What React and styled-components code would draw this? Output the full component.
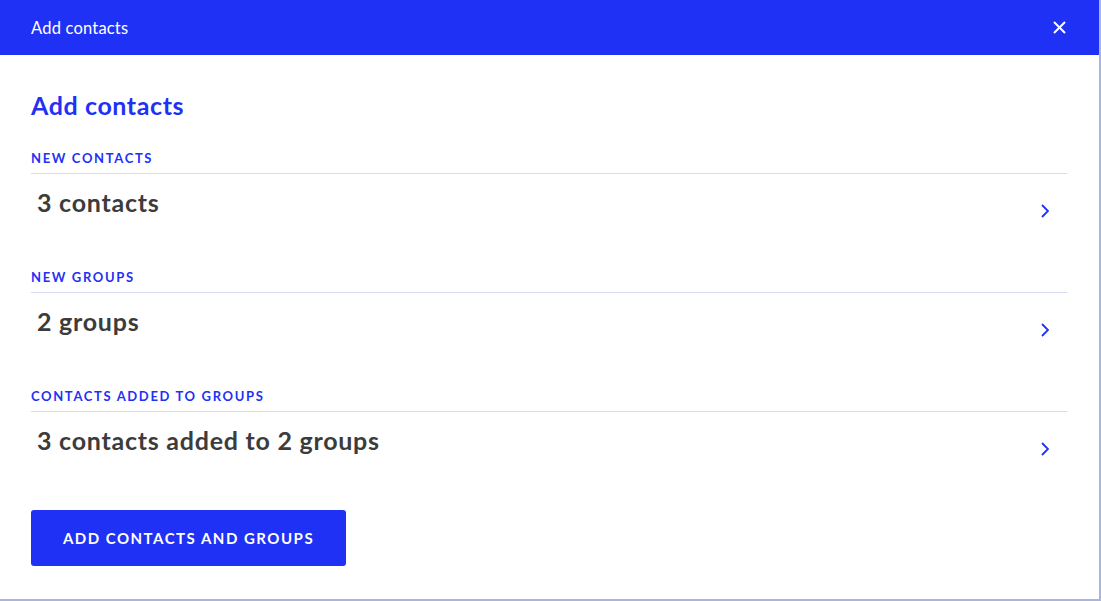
import styled, { createGlobalStyle } from "styled-components"

const GlobalStyle = createGlobalStyle`
    html, body {
        margin: 0;
        padding: 0;
        background: #ffffff;
    }
    body {
        font-family: Lato, "Noto Sans", "Liberation Sans", sans-serif;
    }
`

const BLUE = "#1f31f5"

const Modal = styled.div`
    width: 1099px;
    height: 599px;
    background: #ffffff;
    border-right: 2px solid #a9b5da;
    border-bottom: 2px solid #a9b5da;
    display: flex;
    flex-direction: column;
`
const Header = styled.div`
    height: 55px;
    background: ${BLUE};
    color: #ffffff;
    display: flex;
    align-items: center;
    justify-content: space-between;
    padding: 0 33px 0 31px;
    font-size: 16.5px;
    letter-spacing: 0.2px;
`
const CloseButton = styled.button`
    border: 0;
    background: none;
    padding: 0;
    width: 14px;
    height: 14px;
    display: flex;
    align-items: center;
    justify-content: center;
    cursor: pointer;
`
const Body = styled.div`
    padding: 35px 32px 0 31px;
    display: flex;
    flex-direction: column;
`
const Title = styled.h1`
    margin: 0 0 30px 0;
    font-size: 25px;
    line-height: 30px;
    letter-spacing: 0.6px;
    font-weight: 700;
    color: ${BLUE};
`
const Section = styled.section`
    display: flex;
    flex-direction: column;
    margin-bottom: ${(props) => props.$last ? "24px" : "21px"};
`
const Label = styled.div`
    font-size: 13px;
    line-height: 16px;
    font-weight: 700;
    letter-spacing: 1.65px;
    color: ${BLUE};
    padding-bottom: 7px;
    border-bottom: 1px solid #d6dcf3;
`
const Row = styled.div`
    height: 74px;
    display: flex;
    justify-content: space-between;
    cursor: pointer;
`
const RowText = styled.div`
    padding: 13px 0 0 6px;
    font-size: 25px;
    line-height: 30px;
    letter-spacing: 0.75px;
    font-weight: 700;
    color: #3c3c3c;
`
const Chevron = styled.span`
    align-self: center;
    margin-right: 18px;
    display: flex;
`
const PrimaryButton = styled.button`
    align-self: flex-start;
    width: 315px;
    height: 56px;
    border: 0;
    border-radius: 3px;
    background: ${BLUE};
    color: #ffffff;
    font-family: inherit;
    font-size: 15px;
    font-weight: 700;
    letter-spacing: 1.5px;
    cursor: pointer;
`

const sections = [
    { label: "NEW CONTACTS", text: "3 contacts" },
    { label: "NEW GROUPS", text: "2 groups" },
    { label: "CONTACTS ADDED TO GROUPS", text: "3 contacts added to 2 groups" },
]

export default function App() {
    return (
        <>
            <GlobalStyle />
            <Modal>
                <Header>
                    <span>Add contacts</span>
                    <CloseButton aria-label="Close">
                        <svg width="13" height="13" viewBox="0 0 13 13">
                            <path d="M1 1L12 12M12 1L1 12" stroke="#fff" strokeWidth="2" />
                        </svg>
                    </CloseButton>
                </Header>
                <Body>
                    <Title>Add contacts</Title>
                    {sections.map((s, i) => (
                        <Section key={s.label} $last={i === sections.length - 1}>
                            <Label>{s.label}</Label>
                            <Row>
                                <RowText>{s.text}</RowText>
                                <Chevron>
                                    <svg width="8" height="14" viewBox="0 0 8 14">
                                        <path d="M1 1L7 7L1 13" fill="none" stroke={BLUE} strokeWidth="1.8" />
                                    </svg>
                                </Chevron>
                            </Row>
                        </Section>
                    ))}
                    <PrimaryButton>ADD CONTACTS AND GROUPS</PrimaryButton>
                </Body>
            </Modal>
        </>
    )
}
